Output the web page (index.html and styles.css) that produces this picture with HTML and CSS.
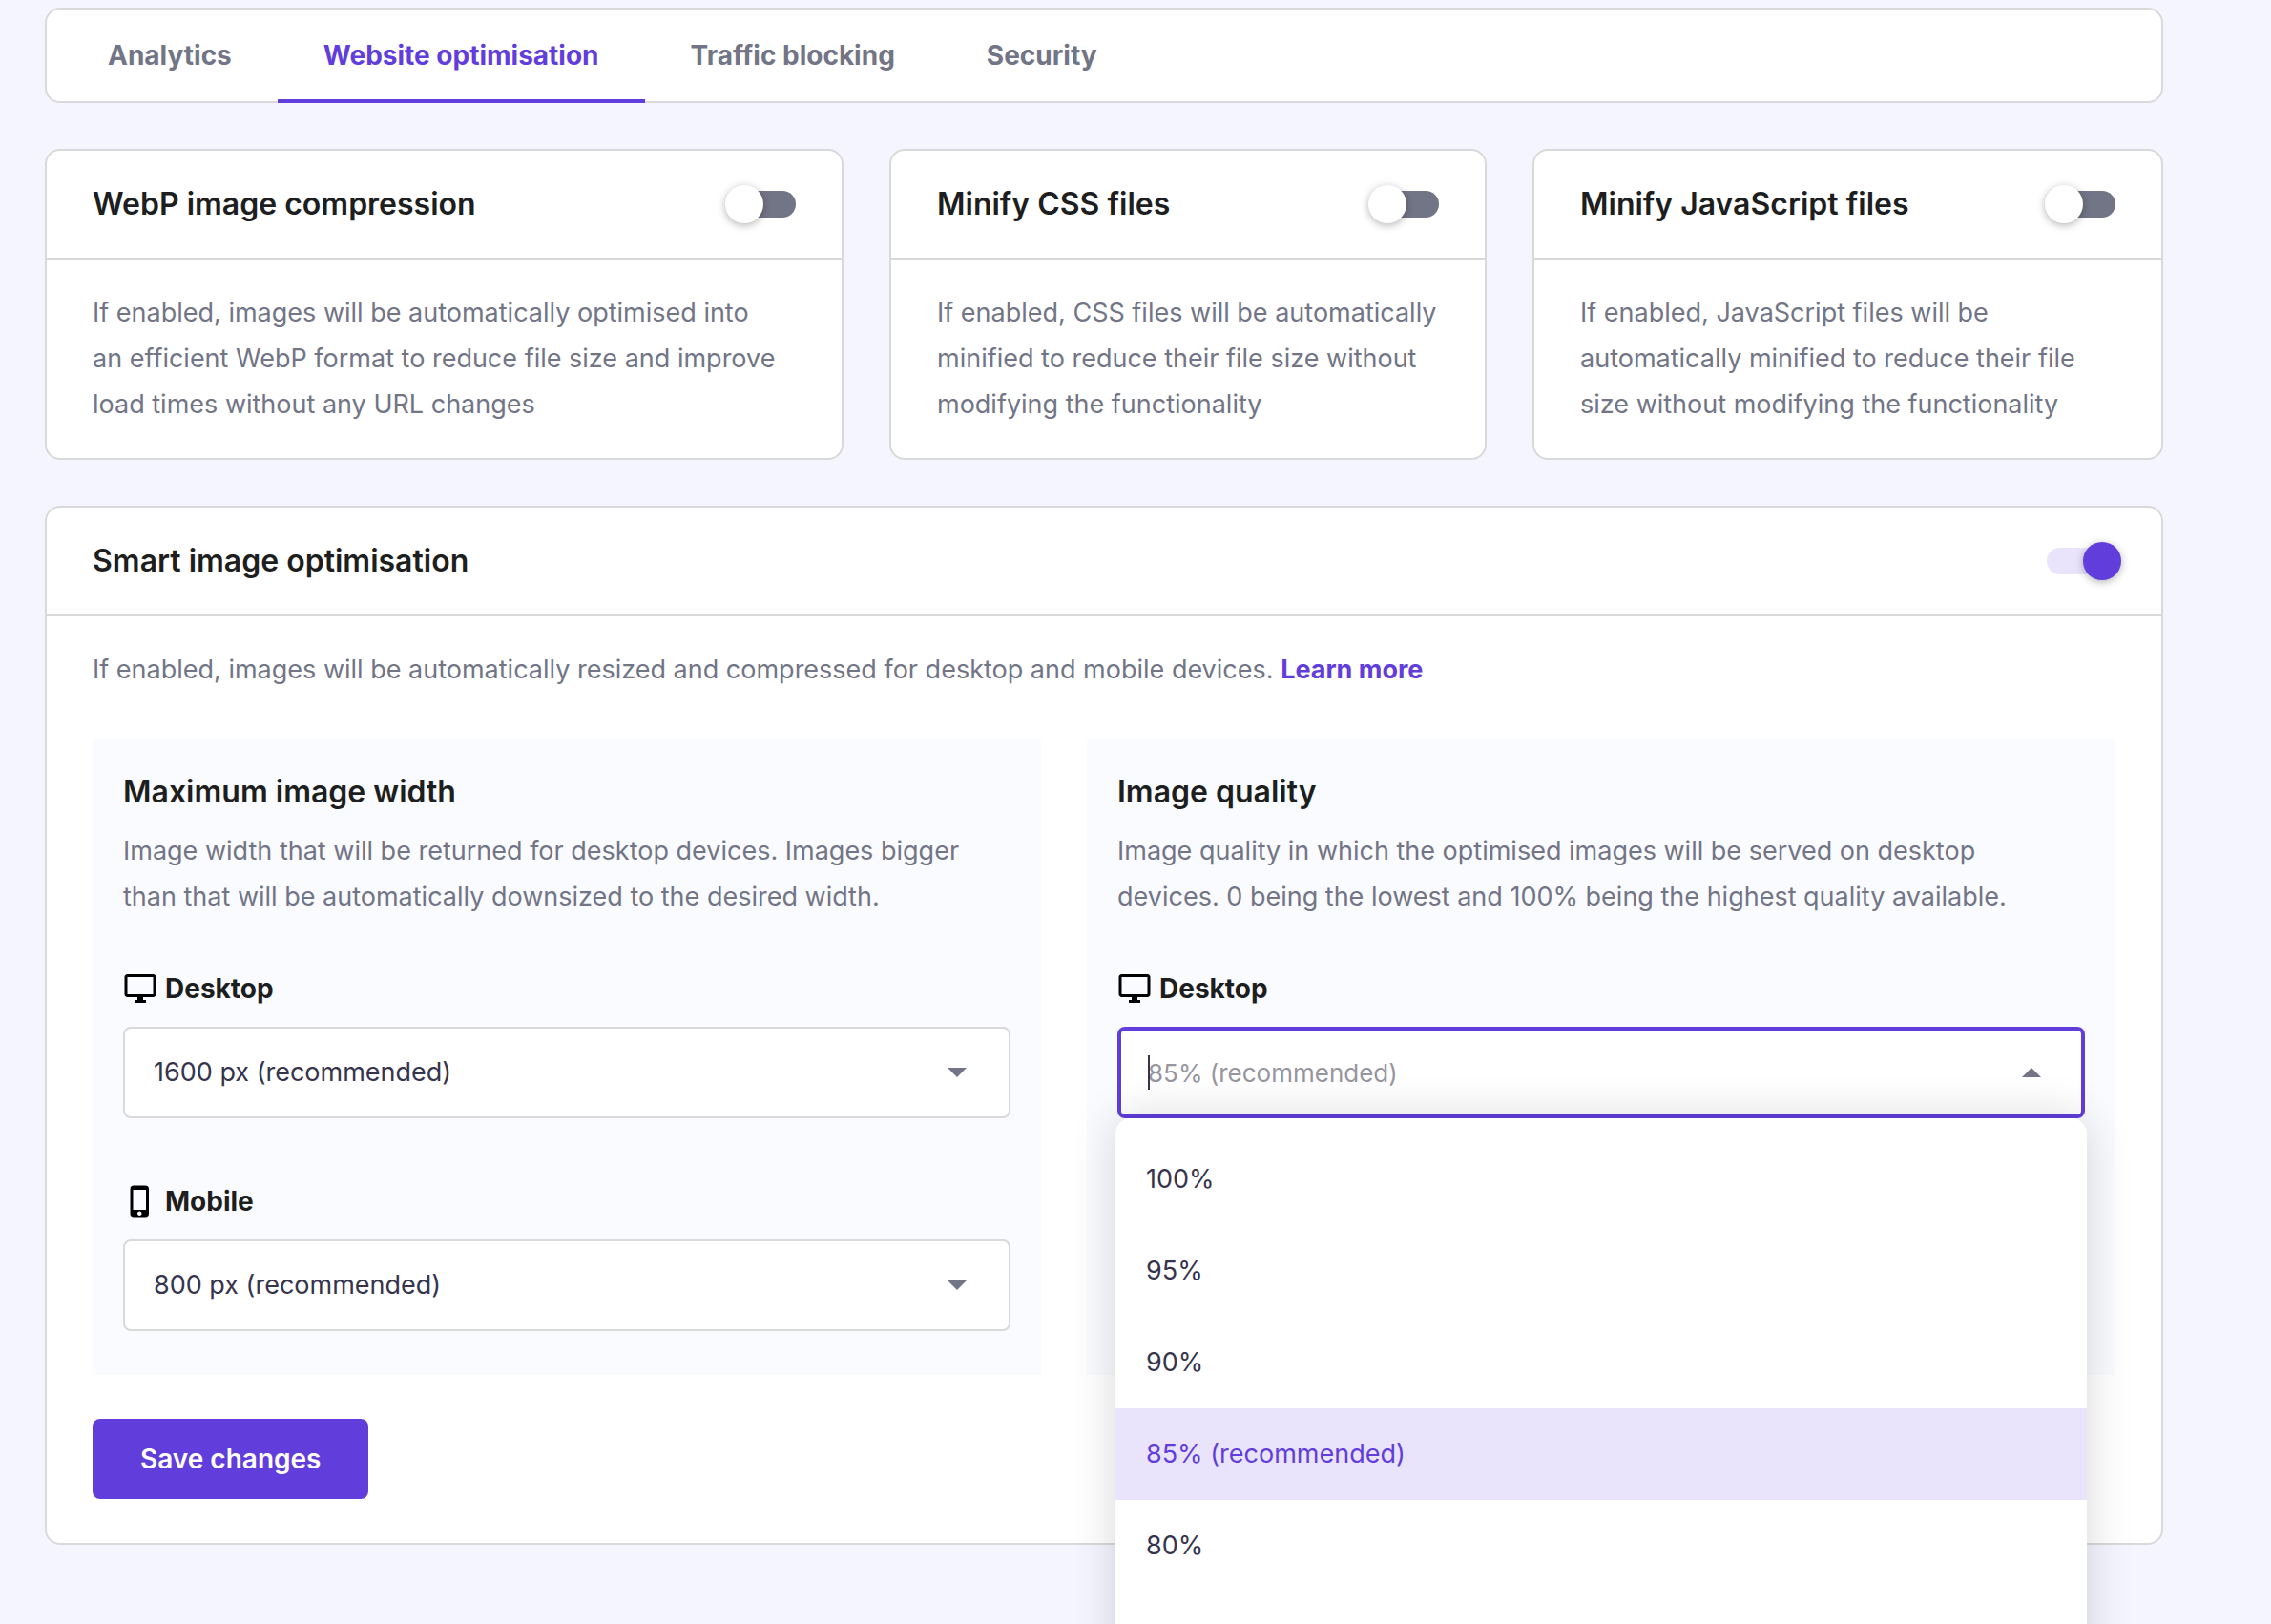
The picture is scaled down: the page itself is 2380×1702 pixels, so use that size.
FILE: index.html
```html
<!DOCTYPE html>
<html lang="en-GB">
<head>
<meta charset="utf-8">
<meta name="viewport" content="width=device-width, initial-scale=1">
<title>Website optimisation</title>
<link rel="stylesheet" href="styles.css">
</head>
<body>
<main class="page">
  <nav class="tabs card">
    <a class="tab" href="#analytics">Analytics</a>
    <a class="tab tab-active" href="#optimisation" aria-current="page">Website optimisation</a>
    <a class="tab" href="#traffic">Traffic blocking</a>
    <a class="tab" href="#security">Security</a>
  </nav>

  <div class="features">
    <section class="card">
      <header class="card-head">
        <h2 class="title"><label for="webp">WebP image compression</label></h2>
        <input class="switch" type="checkbox" role="switch" id="webp">
      </header>
      <p class="card-body text">If enabled, images will be automatically optimised into<br>an efficient WebP format to reduce file size and improve<br>load times without any URL changes</p>
    </section>
    <section class="card">
      <header class="card-head">
        <h2 class="title"><label for="css">Minify CSS files</label></h2>
        <input class="switch" type="checkbox" role="switch" id="css">
      </header>
      <p class="card-body text">If enabled, CSS files will be automatically<br>minified to reduce their file size without<br>modifying the functionality</p>
    </section>
    <section class="card">
      <header class="card-head">
        <h2 class="title"><label for="js">Minify JavaScript files</label></h2>
        <input class="switch" type="checkbox" role="switch" id="js">
      </header>
      <p class="card-body text">If enabled, JavaScript files will be<br>automatically minified to reduce their file<br>size without modifying the functionality</p>
    </section>
  </div>

  <section class="card">
    <header class="card-head">
      <h2 class="title"><label for="smart">Smart image optimisation</label></h2>
      <input class="switch" type="checkbox" role="switch" id="smart" checked>
    </header>
    <form class="card-body smart">
      <p class="text">If enabled, images will be automatically resized and compressed for desktop and mobile devices. <a class="link" href="#learn">Learn more</a></p>
      <div class="panels">
        <div class="panel">
          <h3 class="title">Maximum image width</h3>
          <p class="text panel-text">Image width that will be returned for desktop devices. Images bigger<br>than that will be automatically downsized to the desired width.</p>
          <div class="field">
            <label class="label" for="width-desktop">
              <svg class="icon" viewBox="0 0 24 24" aria-hidden="true"><path d="M21 2H3c-1.100 0-2 .9-2 2v12c0 1.100.9 2 2 2h7v2H8v2h8v-2h-2v-2h7c1.100 0 2-.9 2-2V4c0-1.100-.9-2-2-2zm0 14H3V4h18v12z"/></svg>
              Desktop
            </label>
            <div class="control">
              <select class="box" id="width-desktop"><option>1600 px (recommended)</option></select>
              <svg class="arrow" viewBox="0 0 20 10" aria-hidden="true"><path d="M0 0h20L10 10z"/></svg>
            </div>
          </div>
          <div class="field">
            <label class="label" for="width-mobile">
              <svg class="icon" viewBox="0 0 24 24" aria-hidden="true"><path d="M15.500 1h-8A2.500 2.500 0 0 0 5 3.500v17A2.500 2.500 0 0 0 7.500 23h8a2.500 2.500 0 0 0 2.500-2.500v-17A2.500 2.500 0 0 0 15.500 1zm-4 21c-.83 0-1.500-.67-1.500-1.500s.67-1.500 1.500-1.500 1.500.67 1.500 1.500-.67 1.500-1.500 1.500zm4.500-4H7V4h9v14z"/></svg>
              Mobile
            </label>
            <div class="control">
              <select class="box" id="width-mobile"><option>800 px (recommended)</option></select>
              <svg class="arrow" viewBox="0 0 20 10" aria-hidden="true"><path d="M0 0h20L10 10z"/></svg>
            </div>
          </div>
        </div>
        <div class="panel">
          <h3 class="title">Image quality</h3>
          <p class="text panel-text">Image quality in which the optimised images will be served on desktop<br>devices. 0 being the lowest and 100% being the highest quality available.</p>
          <div class="field">
            <label class="label" for="quality-desktop">
              <svg class="icon" viewBox="0 0 24 24" aria-hidden="true"><path d="M21 2H3c-1.100 0-2 .9-2 2v12c0 1.100.9 2 2 2h7v2H8v2h8v-2h-2v-2h7c1.100 0 2-.9 2-2V4c0-1.100-.9-2-2-2zm0 14H3V4h18v12z"/></svg>
              Desktop
            </label>
            <div class="control">
              <input class="box box-open" id="quality-desktop" type="text" role="combobox" aria-expanded="true" aria-controls="quality-menu" placeholder="85% (recommended)">
              <span class="caret"></span>
              <svg class="arrow" viewBox="0 0 20 10" aria-hidden="true"><path d="M0 10h20L10 0z"/></svg>
              <ul class="menu" id="quality-menu" role="listbox">
                <li class="option" role="option">100%</li>
                <li class="option" role="option">95%</li>
                <li class="option" role="option">90%</li>
                <li class="option option-selected" role="option" aria-selected="true">85% (recommended)</li>
                <li class="option" role="option">80%</li>
              </ul>
            </div>
          </div>
        </div>
      </div>
      <button class="save" type="button">Save changes</button>
    </form>
  </section>
</main>
</body>
</html>
```
FILE: styles.css
```css
:root {
  --primary: #613ddc;
  --primary-light: #e9e4fb;
  --border: #d9d9d9;
  --dark: #1d1e20;
  --muted: #727586;
  --ink: #36344d;
}

* {
  box-sizing: border-box;
}

body,
h2,
h3,
p,
ul {
  margin: 0;
  padding: 0;
}

body {
  background: #f4f5ff;
  color: var(--dark);
  font-family: Inter, "Liberation Sans", sans-serif;
  font-size: 27px;
  line-height: 48px;
}

.page {
  display: flex;
  flex-direction: column;
  gap: 48px;
  min-height: 100vh;
  padding: 8px 113px 0 47px;
  overflow: hidden;
}

.card {
  background: #fff;
  border: 2px solid var(--border);
  border-radius: 16px;
}

/* Tabs */
.tabs {
  display: flex;
  height: 100px;
  padding: 0 16px;
}

.tab {
  height: 98px;
  padding: 24px 48px 0;
  color: var(--muted);
  font-size: 28px;
  font-weight: 700;
  text-decoration: none;
}

.tab-active {
  border-bottom: 4px solid var(--primary);
  color: var(--primary);
}

/* Cards */
.features {
  display: grid;
  grid-template-columns: 837fr 626fr 661fr;
  gap: 48px;
}

.features .card {
  min-width: 0;
}

.card-head {
  display: flex;
  align-items: center;
  justify-content: space-between;
  height: 114px;
  padding: 0 48px;
  border-bottom: 2px solid var(--border);
}

.card-body {
  padding: 32px 48px;
}

.title {
  font-size: 32px;
  font-weight: 600;
  line-height: 48px;
}

.text {
  color: var(--muted);
  white-space: nowrap;
}

.link {
  color: var(--primary);
  font-weight: 700;
  text-decoration: none;
}

/* Switch */
.switch {
  position: relative;
  width: 72px;
  height: 28px;
  margin: 0;
  border-radius: 14px;
  background: #727586;
  appearance: none;
}

.switch::before {
  content: "";
  position: absolute;
  top: -6px;
  left: -2px;
  width: 40px;
  height: 40px;
  border-radius: 50%;
  background: #fff;
  box-shadow: 0 2px 8px rgba(0, 0, 0, 0.3);
}

.switch:checked {
  background: var(--primary-light);
}

.switch:checked::before {
  left: 38px;
  background: var(--primary);
}

/* Smart optimisation */
.smart {
  padding-bottom: 46px;
}

.panels {
  display: grid;
  grid-template-columns: 994fr 1078fr;
  gap: 48px;
  margin: 48px 0 46px;
}

.panel {
  min-width: 0;
  padding: 32px 32px 46px;
  background: #fafbff;
}

.panel-text {
  margin: 14px 0 48px;
}

.field + .field {
  margin-top: 63px;
}

.label {
  display: flex;
  align-items: center;
  gap: 8px;
  margin-bottom: 16px;
  font-size: 28px;
  font-weight: 700;
}

.icon {
  width: 36px;
  height: 36px;
  fill: #000;
}

.control {
  position: relative;
}

.box {
  display: block;
  width: 100%;
  height: 96px;
  padding: 0 30px;
  border: 2px solid var(--border);
  border-radius: 8px;
  background: #fff;
  color: var(--ink);
  font: inherit;
  appearance: none;
}

.box-open {
  padding: 0 28px;
  border: 4px solid var(--primary);
  outline: none;
  font-size: 26px;
}

.box-open::placeholder {
  color: #97969f;
}

.arrow {
  position: absolute;
  top: 43px;
  right: 46px;
  width: 20px;
  height: 10px;
  fill: #727586;
}

.caret {
  position: absolute;
  top: 30px;
  left: 32px;
  width: 2px;
  height: 36px;
  background: var(--ink);
}

.menu {
  position: absolute;
  top: 96px;
  right: -2px;
  left: -2px;
  padding: 16px 0 192px;
  border-radius: 16px;
  background: #fff;
  box-shadow: 0 0 48px rgba(0, 0, 0, 0.16);
  list-style: none;
}

.option {
  padding: 24px 32px;
  color: var(--ink);
}

.option-selected {
  background: var(--primary-light);
  color: var(--primary);
}

.save {
  display: block;
  height: 84px;
  padding: 0 50px;
  border: 0;
  border-radius: 8px;
  background: var(--primary);
  color: #fff;
  font: inherit;
  font-size: 28px;
  font-weight: 600;
}
```
